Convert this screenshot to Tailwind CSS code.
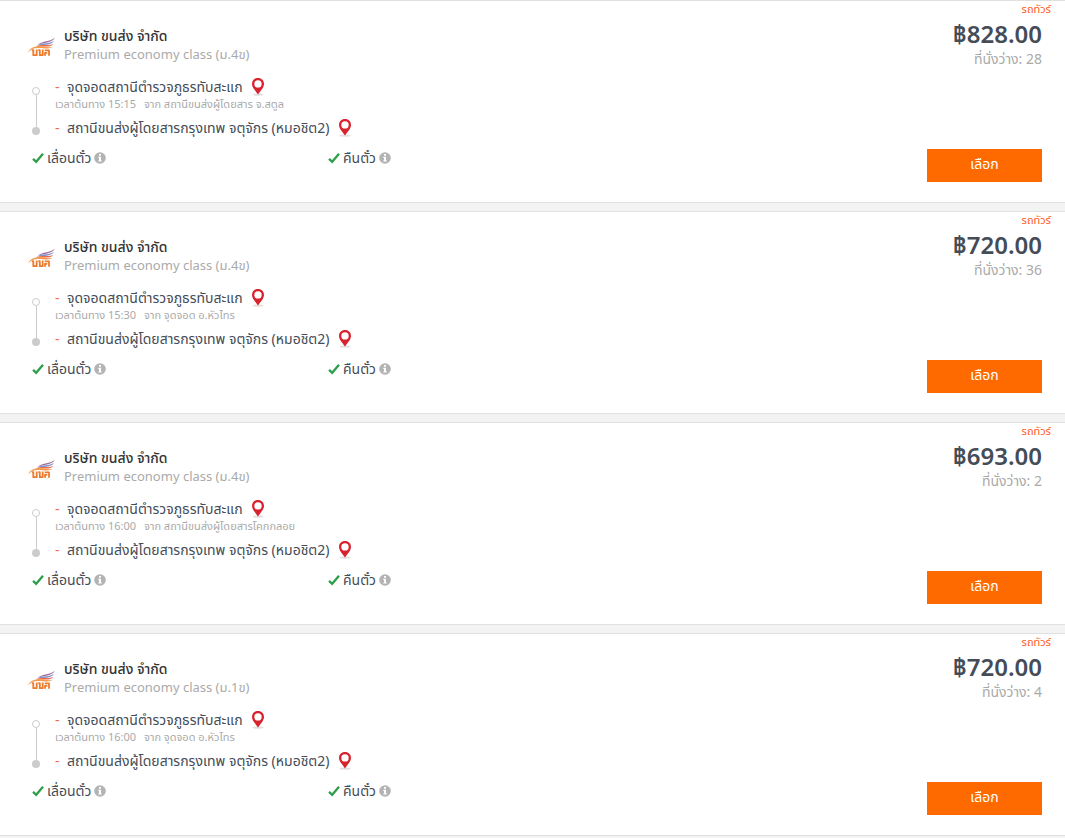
<!DOCTYPE html>
<html lang="th">
<head>
<meta charset="utf-8">
<meta name="viewport" content="width=device-width, initial-scale=1">
<title>รถทัวร์</title>
<script src="https://cdn.jsdelivr.net/npm/@tailwindcss/browser@4"></script>
</head>
<body class="bg-[#f3f3f3] font-['Noto_Sans','Noto_Sans_Thai',sans-serif] text-[#444c57]">
<svg class="hidden" aria-hidden="true">
  <symbol id="pin" viewBox="0 0 14 18">
    <ellipse cx="7" cy="16.600" rx="5.500" ry="1.200" fill="#e3dede"/>
    <path fill="#d8232e" fill-rule="evenodd" d="M7 0C3.400 0 1 2.600 1 5.900C1 9.500 4.500 12.500 7 16.500C9.500 12.500 13 9.500 13 5.900C13 2.600 10.600 0 7 0ZM7 2.200A3.700 3.700 0 1 1 7 9.600A3.700 3.700 0 1 1 7 2.200Z"/>
  </symbol>
  <symbol id="check" viewBox="0 0 12 12">
    <path fill="none" stroke="#2f9e4b" stroke-width="2.300" d="M1 6.800L4.200 9.800L11 1.800"/>
  </symbol>
  <symbol id="info" viewBox="0 0 12 12">
    <circle cx="6" cy="6" r="5.800" fill="#b3b3b3"/>
    <path fill="#fff" d="M5 2h2v1.700H5zM4.300 4.800H7v3.600h.8v1.200H4.300V8.400H5V6h-.7z"/>
  </symbol>
  <symbol id="logo" viewBox="0 0 28 20">
    <path fill="#a06a9c" d="M27 .5C22 5 15 3.500 9.500 8C15 5.500 24 6.500 27 .5Z"/>
    <path fill="#7f93c8" d="M26 3.800C21 7.500 15 5 9 8.500C15 7.500 23 9 26 3.800Z"/>
    <path fill="#ef6b4a" d="M25.500 6.800C20 9.500 15 6.500 7 9.500C14 8.500 22 11.500 25.500 6.800Z"/>
    <path fill="#f59a4c" d="M24.500 9.800C19 11.500 14 8 8 9.500C4 10.500 1 12 .3 15.800C2.500 12 6 11.300 9 11C15 10.500 21 13 24.500 9.800Z"/>
    <g fill="none" stroke="#ee7b2b" stroke-width="1.800" stroke-linejoin="round">
      <path d="M3.800 13.200H5.300V18.200H8.700V12.500"/>
      <path d="M10.300 13.200H11.800V18.200H14.700V12.500"/>
      <path d="M17 18.800V15.800H19.300M16.700 13.300H21V18.800"/>
    </g>
  </symbol>
</svg>

<main id="trips" class="flex flex-col gap-2"></main>

<template id="trip">
  <article class="flex justify-between border-y border-[#e0e0e0] bg-white pr-[23px] pb-5 pl-7">
    <div class="min-w-0 flex-1 pt-[25px] pb-3.5">
      <header class="flex gap-2">
        <svg class="mt-[11px] h-5 w-7 shrink-0" role="img" aria-label="บขส"><use href="#logo"/></svg>
        <div>
          <h2 class="text-sm leading-[19px] font-medium text-[#333]">บริษัท ขนส่ง จำกัด</h2>
          <p class="text-[13px] leading-[18px] text-[#aaa]" data-f="cls"></p>
        </div>
      </header>
      <div class="mt-3.5 flex gap-[15px] pl-1">
        <div class="flex w-2 flex-col items-center pt-[10px] pb-[3px]">
          <i class="size-2 rounded-full border border-[#ccc] bg-white"></i>
          <i class="w-px flex-1 bg-[#ccc]"></i>
          <i class="size-2 rounded-full bg-[#ccc]"></i>
        </div>
        <div>
          <p class="flex items-center text-sm leading-5"><span class="w-3 text-[#f26a3c]">-</span>จุดจอดสถานีตำรวจภูธรทับสะแก<svg class="ml-2 h-[18px] w-3.5"><use href="#pin"/></svg></p>
          <p class="flex gap-2 text-[11px] leading-3.5 text-[#aaa]"><span data-f="time"></span><span data-f="from"></span></p>
          <p class="mt-[7px] flex items-center text-sm leading-5"><span class="w-3 text-[#f26a3c]">-</span>สถานีขนส่งผู้โดยสารกรุงเทพ จตุจักร (หมอชิต2)<svg class="ml-2 h-[18px] w-3.5"><use href="#pin"/></svg></p>
        </div>
      </div>
      <ul class="mt-2.5 flex pl-1 text-sm leading-5">
        <li class="flex w-[296px] items-center gap-[3px]"><svg class="size-3"><use href="#check"/></svg>เลื่อนตั๋ว<svg class="size-3"><use href="#info"/></svg></li>
        <li class="flex items-center gap-[3px]"><svg class="size-3"><use href="#check"/></svg>คืนตั๋ว<svg class="size-3"><use href="#info"/></svg></li>
      </ul>
    </div>
    <div class="flex flex-col items-end">
      <span class="-mr-[9px] text-[11px] leading-4 text-[#ff5a1f]">รถทัวร์</span>
      <strong class="text-2xl leading-[34px] font-semibold" data-f="price"></strong>
      <p class="text-sm leading-4 text-[#aaa]" data-f="seats"></p>
      <button type="button" class="mt-auto h-[33px] w-[115px] cursor-pointer bg-[#ff6a00] pb-1 text-sm text-white">เลือก</button>
    </div>
  </article>
</template>

<script>
  const trips = [
    { cls: 'ม.4ข', time: '15:15', from: 'สถานีขนส่งผู้โดยสาร จ.สตูล', price: '828.00', seats: 28 },
    { cls: 'ม.4ข', time: '15:30', from: 'จุดจอด อ.หัวไทร', price: '720.00', seats: 36 },
    { cls: 'ม.4ข', time: '16:00', from: 'สถานีขนส่งผู้โดยสารโคกกลอย', price: '693.00', seats: 2 },
    { cls: 'ม.1ข', time: '16:00', from: 'จุดจอด อ.หัวไทร', price: '720.00', seats: 4 },
  ];
  const list = document.getElementById('trips');
  for (const t of trips) {
    const card = document.getElementById('trip').content.cloneNode(true);
    const set = (name, text) => { card.querySelector(`[data-f=${name}]`).textContent = text; };
    set('cls', `Premium economy class (${t.cls})`);
    set('time', `เวลาต้นทาง ${t.time}`);
    set('from', `จาก ${t.from}`);
    set('price', `฿${t.price}`);
    set('seats', `ที่นั่งว่าง: ${t.seats}`);
    list.append(card);
  }
</script>
</body>
</html>
